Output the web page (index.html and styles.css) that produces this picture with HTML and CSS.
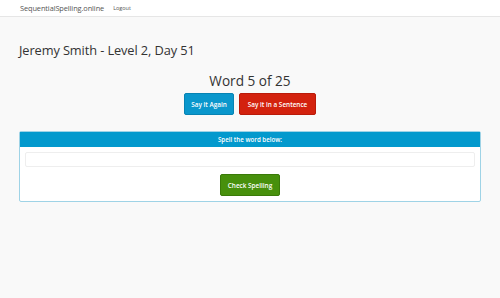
FILE: index.html
```html
<!DOCTYPE html>
<html lang="en">
<head>
    <meta charset="UTF-8">
    <meta name="viewport" content="width=device-width, initial-scale=1.0">
    <title>Sequential Spelling</title>
    <link rel="stylesheet" href="styles.css">
</head>
<body>

<nav class="top-bar">
    <a class="brand" href="#">SequentialSpelling.online</a>
    <a class="nav-link" href="#">Logout</a>
</nav>

<div class="page">
    <h2 class="student">Jeremy Smith - Level 2, Day 51</h2>

    <div class="word-box">
        <h3 class="word-count">Word 5 of 25</h3>
        <div class="actions">
            <button class="btn btn-blue">Say it Again</button>
            <button class="btn btn-red">Say it in a Sentence</button>
        </div>
    </div>

    <div class="panel">
        <div class="panel-head">Spell the word below:</div>
        <div class="panel-body">
            <input type="text" class="spell-input">
            <button class="btn btn-green">Check Spelling</button>
        </div>
    </div>
</div>

</body>
</html>
```

FILE: styles.css
```css
body {
    font-family: "Open Sans", Arial, sans-serif;
    margin: 0;
    background-color: #f9f9f9;
    color: #333333;
}
.top-bar {
    display: flex;
    align-items: center;
    height: 16px;
    padding: 0 20px;
    background-color: #ffffff;
    border-bottom: 1px solid #e6e6e6;
}
.brand {
    font-size: 7.4px;
    color: #555555;
    text-decoration: none;
    letter-spacing: -0.1px;
}
.nav-link {
    font-size: 5.5px;
    color: #555555;
    text-decoration: none;
    margin-left: 9px;
}
.page {
    padding: 0 19px;
}
.student {
    font-weight: normal;
    font-size: 12.8px;
    margin: 23px 0 0 0;
    line-height: 20px;
    letter-spacing: -0.1px;
}
.word-box {
    text-align: center;
    margin-top: 12px;
}
.word-count {
    font-weight: normal;
    font-size: 13.6px;
    line-height: 18px;
    margin: 0;
}
.actions {
    display: flex;
    justify-content: center;
    gap: 5px;
    margin-top: 3px;
}
.btn {
    font-family: "Open Sans", Arial, sans-serif;
    color: #ffffff;
    font-size: 6.4px;
    font-weight: 600;
    height: 22px;
    padding: 0;
    white-space: nowrap;
    border: none;
    border-radius: 2px;
    cursor: pointer;
}
.btn-blue {
    width: 50px;
    background-color: #0a97cc;
    border: 1px solid #0783b3;
}
.btn-red {
    width: 77px;
    background-color: #d3220e;
    border: 1px solid #b91b0a;
}
.btn-green {
    width: 60px;
    background-color: #47900c;
    border: 1px solid #3a7a08;
}
.panel {
    margin-top: 16px;
    border: 1px solid #9fd3e6;
    border-radius: 2px;
    background-color: #ffffff;
}
.panel-head {
    background-color: #0399cd;
    color: #ffffff;
    font-size: 6.2px;
    font-weight: 600;
    text-align: center;
    height: 15px;
    line-height: 15px;
}
.panel-body {
    display: flex;
    flex-direction: column;
    align-items: center;
    padding: 5px 5px 5px 5px;
}
.spell-input {
    width: 100%;
    height: 15px;
    box-sizing: border-box;
    border: 1px solid #eeeeee;
    border-radius: 2px;
    background-color: #ffffff;
    margin: 0 0 7px 0;
}
```
